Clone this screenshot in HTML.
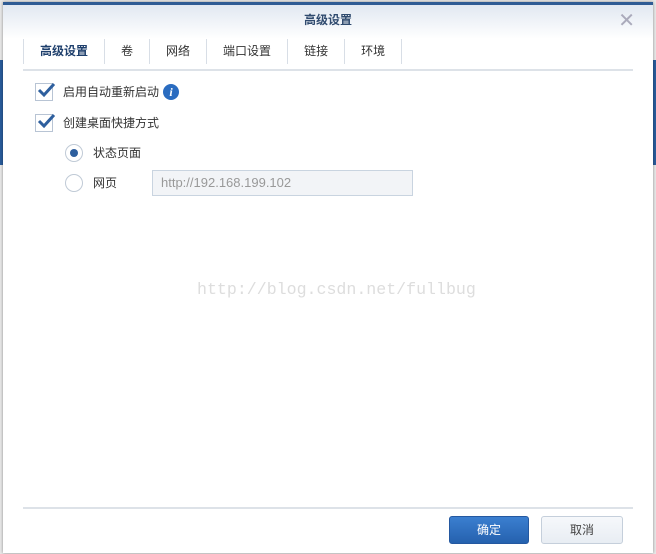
<!DOCTYPE html>
<html><head><meta charset="utf-8"><style>
body{margin:0;width:656px;height:554px;background:#e8e8e8;position:relative;overflow:hidden;font-family:"Liberation Sans","Noto Sans CJK SC",sans-serif;font-size:12px;color:#333}
.bgstrip{position:absolute;left:0;top:60px;width:3px;height:105px;background:#2a5d9c}
.bgstrip2{position:absolute;right:0;top:60px;width:3px;height:105px;background:#2a5d9c}
.dlg{position:absolute;left:3px;top:2px;width:650px;height:548px;background:#fff;border-top:3px solid #2e5b94;box-shadow:0 0 3px rgba(0,0,0,.4)}
.hdr{position:absolute;left:0;top:0;width:650px;height:34px;background:linear-gradient(#e1e8f1,#fff)}
.title{position:absolute;left:0;width:650px;top:6px;text-align:center;font-weight:bold;color:#2f4a6e;font-size:12px;line-height:18px}
.close{position:absolute;right:18px;top:8px;font-size:20px;color:#aab;line-height:16px}
.tabs{position:absolute;left:20px;top:34px;height:27px;display:flex}
.tab{padding:0 16px;height:25px;line-height:24px;border-left:1px solid #d8dee6;font-size:12px;color:#333}
.tab.a{font-weight:bold;color:#1e3f6c}
.tl{position:absolute;left:20px;top:64px;width:610px;height:2px;background:#dde2e8}
.cb{position:absolute;left:32px;width:16px;height:16px;border:1px solid #b8c4d4;background:#fff}
.cb svg{position:absolute;left:1px;top:-3px}
.lbl{position:absolute;font-size:12px;line-height:16px}
.rd{position:absolute;left:62px;width:16px;height:16px;border-radius:50%;border:1px solid #c0cad6;background:#fff}
.rd.on::after{content:"";position:absolute;left:4px;top:4px;width:8px;height:8px;border-radius:50%;background:#2e5f9e}
.inp{position:absolute;left:149px;top:165px;height:26px;border:1px solid #c9d4e0;background:#f2f4f7;color:#999;line-height:24px;padding-left:8px;box-sizing:border-box;width:261px;font-size:13px}
.wm{position:absolute;left:194px;top:275px;font-family:"Liberation Mono",monospace;font-size:16.6px;color:#ddd}
.fl{position:absolute;left:20px;top:502px;width:610px;height:2px;background:#dde2e8}
.btn{position:absolute;top:511px;width:80px;height:28px;border-radius:3px;text-align:center;line-height:26px;font-size:12px}
.ok{left:446px;background:linear-gradient(#3b7fd0,#2561ae);color:#fff;border:1px solid #2458a0;box-sizing:border-box}
.cn{left:538px;background:linear-gradient(#f6f8fb,#e8edf3);color:#444;border:1px solid #c5cfdb;box-sizing:border-box;width:82px}
</style></head><body>
<div class="bgstrip"></div><div class="bgstrip2"></div>
<div class="dlg">
<div class="hdr"></div>
<div class="title">高级设置</div>
<div class="close">✕</div>
<div class="tabs"><div class="tab a">高级设置</div><div class="tab">卷</div><div class="tab">网络</div><div class="tab">端口设置</div><div class="tab">链接</div><div class="tab">环境</div><div class="tab" style="padding:0"></div></div>
<div class="tl"></div>
<div class="cb" style="top:78px"><svg width="18" height="18" viewBox="0 0 18 18"><path d="M2 9 L7 14 L17 3" stroke="#2e5f9e" stroke-width="3" fill="none"/></svg></div>
<div class="lbl" style="left:60px;top:79px">启用自动重新启动</div>
<div style="position:absolute;left:160px;top:79px;width:16px;height:16px;border-radius:50%;background:#2a6cc0;color:#fff;font:italic bold 12px 'Liberation Serif',serif;text-align:center;line-height:16px">i</div>
<div class="cb" style="top:109px"><svg width="18" height="18" viewBox="0 0 18 18"><path d="M2 9 L7 14 L17 3" stroke="#2e5f9e" stroke-width="3" fill="none"/></svg></div>
<div class="lbl" style="left:60px;top:110px">创建桌面快捷方式</div>
<div class="rd on" style="top:139px"></div>
<div class="lbl" style="left:90px;top:140px">状态页面</div>
<div class="rd" style="top:169px"></div>
<div class="lbl" style="left:90px;top:170px">网页</div>
<div class="inp">http://192.168.199.102</div>
<div class="wm">http://blog.csdn.net/fullbug</div>
<div class="fl"></div>
<div class="btn ok">确定</div>
<div class="btn cn">取消</div>
</div>
</body></html>
